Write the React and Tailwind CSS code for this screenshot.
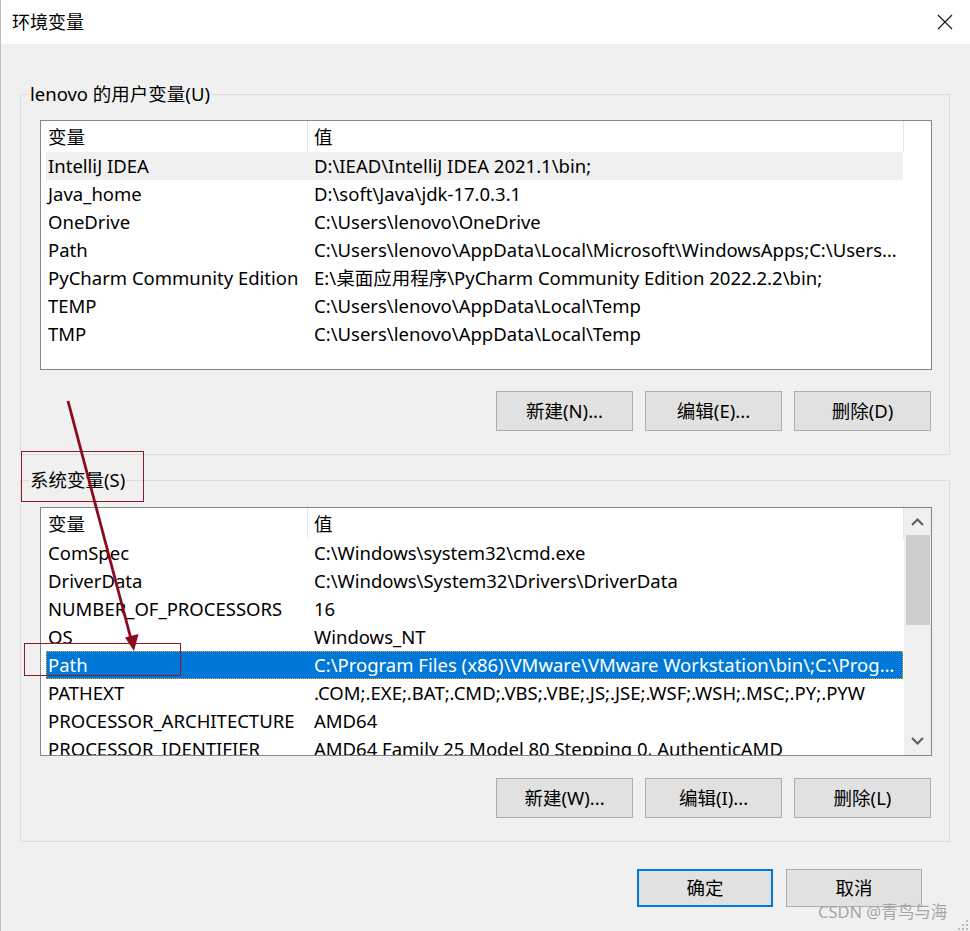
import React from "react";

const userVars = [
  ["IntelliJ IDEA", "D:\\IEAD\\IntelliJ IDEA 2021.1\\bin;", "hover"],
  ["Java_home", "D:\\soft\\Java\\jdk-17.0.3.1"],
  ["OneDrive", "C:\\Users\\lenovo\\OneDrive"],
  ["Path", "C:\\Users\\lenovo\\AppData\\Local\\Microsoft\\WindowsApps;C:\\Users\\lenovo\\AppData\\Local\\Programs"],
  ["PyCharm Community Edition", "E:\\桌面应用程序\\PyCharm Community Edition 2022.2.2\\bin;"],
  ["TEMP", "C:\\Users\\lenovo\\AppData\\Local\\Temp"],
  ["TMP", "C:\\Users\\lenovo\\AppData\\Local\\Temp"],
];

const sysVars = [
  ["ComSpec", "C:\\Windows\\system32\\cmd.exe"],
  ["DriverData", "C:\\Windows\\System32\\Drivers\\DriverData"],
  ["NUMBER_OF_PROCESSORS", "16"],
  ["OS", "Windows_NT"],
  ["Path", "C:\\Program Files (x86)\\VMware\\VMware Workstation\\bin\\;C:\\Program Files\\Common Files", "selected"],
  ["PATHEXT", ".COM;.EXE;.BAT;.CMD;.VBS;.VBE;.JS;.JSE;.WSF;.WSH;.MSC;.PY;.PYW"],
  ["PROCESSOR_ARCHITECTURE", "AMD64"],
  ["PROCESSOR_IDENTIFIER", "AMD64 Family 25 Model 80 Stepping 0, AuthenticAMD"],
];

function Header() {
  return (
    <div className="flex h-[31px] w-[863px] shrink-0 border-r border-[#e5e5e5] bg-white">
      <div className="flex w-[267px] items-center border-r border-[#e5e5e5] pl-[7px]">变量</div>
      <div className="flex items-center pl-[6px]">值</div>
    </div>
  );
}

function Row({ name, value, state }) {
  const base = "ml-[5px] flex h-[28px] w-[857px] shrink-0 items-center";
  let cls = base;
  if (state === "hover") cls = base + " bg-[#f0f0f0]";
  if (state === "selected")
    cls = base + " bg-[#0078d7] text-white outline outline-1 outline-dotted outline-[#f5a623] outline-offset-[-1px]";
  return (
    <div className={cls}>
      <div className="w-[261px] shrink-0 truncate pl-[2px]">{name}</div>
      <div className="min-w-0 flex-1 truncate pl-[7px] pr-[6px]">{value}</div>
    </div>
  );
}

function Btn({ children, ok }) {
  if (ok)
    return (
      <div className="flex h-[38px] w-[136px] items-center justify-center border-2 border-[#0078d7] bg-[#e1e1e1]">
        {children}
      </div>
    );
  return (
    <div className="flex h-[40px] w-[137px] items-center justify-center border border-[#adadad] bg-[#e1e1e1]">
      {children}
    </div>
  );
}

function Chevron({ up }) {
  return (
    <svg width="13" height="9" viewBox="0 0 13 9">
      {up ? (
        <path d="M1 8 L6.5 2.5 L12 8" fill="none" stroke="#606060" strokeWidth="2.2" />
      ) : (
        <path d="M1 1 L6.5 6.5 L12 1" fill="none" stroke="#606060" strokeWidth="2.2" />
      )}
    </svg>
  );
}

export default function App() {
  return (
    <div className="relative h-[931px] w-[970px] overflow-hidden border-l border-[#bdbdbd] bg-[#f0f0f0] font-['Noto_Sans','Noto_Sans_CJK_SC',sans-serif] text-[18.5px] leading-[28px] text-black">
      {/* Title bar */}
      <div className="flex h-[44px] items-center justify-between bg-white pl-[11px] pr-[17px]">
        <span className="text-[18px]">环境变量</span>
        <svg width="16" height="16" viewBox="0 0 16 16">
          <path d="M1 1 L15 15 M15 1 L1 15" stroke="#111" strokeWidth="1.1" />
        </svg>
      </div>

      <div className="flex flex-col pl-[19px] pr-[20px]">
        {/* User variables */}
        <div className="relative mt-[50px] flex h-[361px] flex-col border border-[#dcdcdc] pl-[19px] pr-[17px] pt-[25px]">
          <span className="absolute left-[8px] top-[-15px] bg-[#f0f0f0] px-[1px]">lenovo 的用户变量(U)</span>
          <div className="flex h-[250px] w-[892px] flex-col overflow-hidden border border-[#828790] bg-white">
            <Header />
            {userVars.map(([n, v, s]) => (
              <Row key={n} name={n} value={v} state={s} />
            ))}
          </div>
          <div className="mt-[21px] flex justify-end gap-[12px] pr-[1px]">
            <Btn>新建(N)...</Btn>
            <Btn>编辑(E)...</Btn>
            <Btn>删除(D)</Btn>
          </div>
        </div>

        {/* System variables */}
        <div className="relative mt-[25px] flex h-[362px] flex-col border border-[#dcdcdc] pl-[19px] pr-[17px] pt-[26px]">
          <span className="absolute left-[8px] top-[-15px] bg-[#f0f0f0] px-[1px]">系统变量(S)</span>
          <div className="flex h-[249px] w-[892px] overflow-hidden border border-[#828790] bg-white">
            <div className="flex w-[863px] flex-col overflow-hidden">
              <Header />
              {sysVars.map(([n, v, s]) => (
                <Row key={n} name={n} value={v} state={s} />
              ))}
            </div>
            <div className="flex w-[27px] flex-col bg-[#f0f0f0]">
              <div className="flex h-[27px] items-center justify-center">
                <Chevron up />
              </div>
              <div className="mx-auto h-[90px] w-[24px] bg-[#cdcdcd]" />
              <div className="flex-1" />
              <div className="flex h-[27px] items-center justify-center">
                <Chevron />
              </div>
            </div>
          </div>
          <div className="mt-[22px] flex justify-end gap-[12px] pr-[1px]">
            <Btn>新建(W)...</Btn>
            <Btn>编辑(I)...</Btn>
            <Btn>删除(L)</Btn>
          </div>
        </div>

        {/* OK / Cancel */}
        <div className="mt-[27px] flex justify-end gap-[13px] pr-[28px]">
          <Btn ok>确定</Btn>
          <div className="flex h-[38px] w-[136px] items-center justify-center border border-[#adadad] bg-[#e1e1e1]">取消</div>
        </div>
      </div>

      {/* Annotation overlays */}
      <div className="pointer-events-none absolute left-[20px] top-[451px] h-[51px] w-[123px] border border-[#8b1a2b]" />
      <div className="pointer-events-none absolute left-[23px] top-[643px] h-[33px] w-[157px] border border-[#8b1a2b]" />
      <svg className="pointer-events-none absolute left-0 top-0" width="970" height="931">
        <line x1="67" y1="401" x2="130" y2="639" stroke="#8b0a1e" strokeWidth="2.8" />
        <polygon points="133,651 137.5,634 124,637.5" fill="#8b0a1e" />
      </svg>

      {/* Watermark */}
      <div className="pointer-events-none absolute left-[817px] top-[899px] text-[16.5px] leading-[26px] text-[#a6a6a6]">
        CSDN @青鸟与海
      </div>
      <svg className="pointer-events-none absolute left-[957px] top-[918px]" width="12" height="12" viewBox="0 0 12 12">
        <rect x="8" y="2" width="2" height="2" fill="#bbb" />
        <rect x="4" y="6" width="2" height="2" fill="#bbb" />
        <rect x="8" y="6" width="2" height="2" fill="#bbb" />
        <rect x="0" y="10" width="2" height="2" fill="#bbb" />
        <rect x="4" y="10" width="2" height="2" fill="#bbb" />
        <rect x="8" y="10" width="2" height="2" fill="#bbb" />
      </svg>
    </div>
  );
}
